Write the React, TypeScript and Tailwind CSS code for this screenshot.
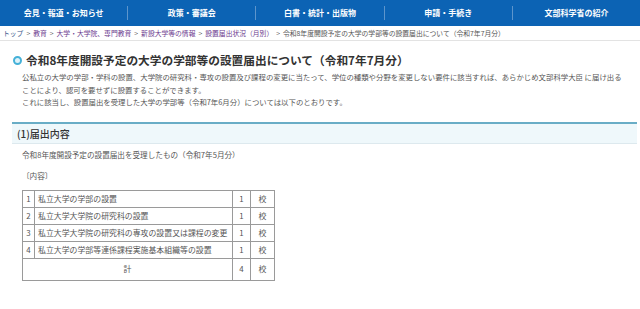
import React from "react";

const navItems = ["会見・報道・お知らせ", "政策・審議会", "白書・統計・出版物", "申請・手続き", "文部科学省の紹介"];

const crumbs = [
  { label: "トップ", cls: "text-[#3b5a8c]" },
  { label: "教育", cls: "text-[#6b3a8e]" },
  { label: "大学・大学院、専門教育", cls: "text-[#6b3a8e]" },
  { label: "新設大学等の情報", cls: "text-[#6b3a8e]" },
  { label: "設置届出状況（月別）", cls: "text-[#6b3a8e]" },
];

const rows = [
  { no: "1", name: "私立大学の学部の設置", count: "1" },
  { no: "2", name: "私立大学大学院の研究科の設置", count: "1" },
  { no: "3", name: "私立大学大学院の研究科の専攻の設置又は課程の変更", count: "1" },
  { no: "4", name: "私立大学の学部等連係課程実施基本組織等の設置", count: "1" },
];

const App = () => {
  return (
    <div className="w-[640px] h-[309px] overflow-hidden bg-white font-['Noto_Sans_CJK_JP',sans-serif] text-[#333]">
      {/* global nav */}
      <nav className="h-[26px] bg-[#0c63b4] flex items-center">
        {navItems.map((item, i) => (
          <div
            key={item}
            className={`flex-1 h-[14px] flex items-center justify-center text-white text-[8px] font-bold ${
              i < navItems.length - 1 ? "border-r border-[#5d95cc]" : ""
            }`}
          >
            {item}
          </div>
        ))}
      </nav>

      {/* breadcrumb */}
      <div className="h-[15px] flex items-center pl-[3px] border-b border-[#e3e3e3] text-[6.8px] text-[#555] whitespace-nowrap">
        {crumbs.map((c) => (
          <span key={c.label}>
            <span className={c.cls}>{c.label}</span>
            <span className="mx-[3px]">&gt;</span>
          </span>
        ))}
        <span>令和8年度開設予定の大学の学部等の設置届出について（令和7年7月分）</span>
      </div>

      <main className="px-[12px]">
        <h1 className="mt-[11px] flex items-center gap-[4px] pl-[1px] text-[11.7px] font-bold leading-[16px] text-[#333]">
          <span className="w-[9px] h-[9px] rounded-full border-[2.5px] border-[#45b1d8] bg-[#dff3fa]" />
          令和8年度開設予定の大学の学部等の設置届出について（令和7年7月分）
        </h1>

        <div className="mt-[3px] pl-[10px] text-[7.4px] leading-[12.5px] text-[#555] whitespace-nowrap">
          <p>
            公私立の大学の学部・学科の設置、大学院の研究科・専攻の設置及び課程の変更に当たって、学位の種類や分野を変更しない要件に該当すれば、あらかじめ文部科学大臣
            に届け出る
            <br />
            ことにより、認可を要せずに設置することができます。
          </p>
          <p>これに該当し、設置届出を受理した大学の学部等（令和7年6月分）については以下のとおりです。</p>
        </div>

        {/* section */}
        <section className="mt-[13px] -mr-[9px]">
          <h2 className="h-[22px] flex items-center pl-[5px] border-t-2 border-[#69adc6] border-b border-b-[#dde9ee] bg-[#eff8fb] text-[10px] font-medium text-[#333]">
            (1)届出内容
          </h2>

          <div className="pl-[10px] text-[7.6px] text-[#555]">
            <p className="mt-[5px] leading-[12px]">令和8年度開設予定の設置届出を受理したもの（令和7年5月分）</p>
            <p className="mt-[9px] leading-[12px]">〔内容〕</p>

            <table className="mt-[8px] border-collapse text-[7.9px] text-[#555]">
              <tbody>
                {rows.map((r) => (
                  <tr key={r.no} className="h-[17px]">
                    <td className="w-[12px] border border-[#9a9a9a] text-center">{r.no}</td>
                    <td className="w-[198px] border border-[#9a9a9a] pl-[3px]">{r.name}</td>
                    <td className="w-[18px] border border-[#9a9a9a] text-center">{r.count}</td>
                    <td className="w-[24px] border border-[#9a9a9a] text-center">校</td>
                  </tr>
                ))}
                <tr className="h-[22px]">
                  <td colSpan={2} className="border border-[#9a9a9a] text-center">
                    計
                  </td>
                  <td className="border border-[#9a9a9a] text-center">4</td>
                  <td className="border border-[#9a9a9a] text-center">校</td>
                </tr>
              </tbody>
            </table>
          </div>
        </section>
      </main>
    </div>
  );
};

export default App;
